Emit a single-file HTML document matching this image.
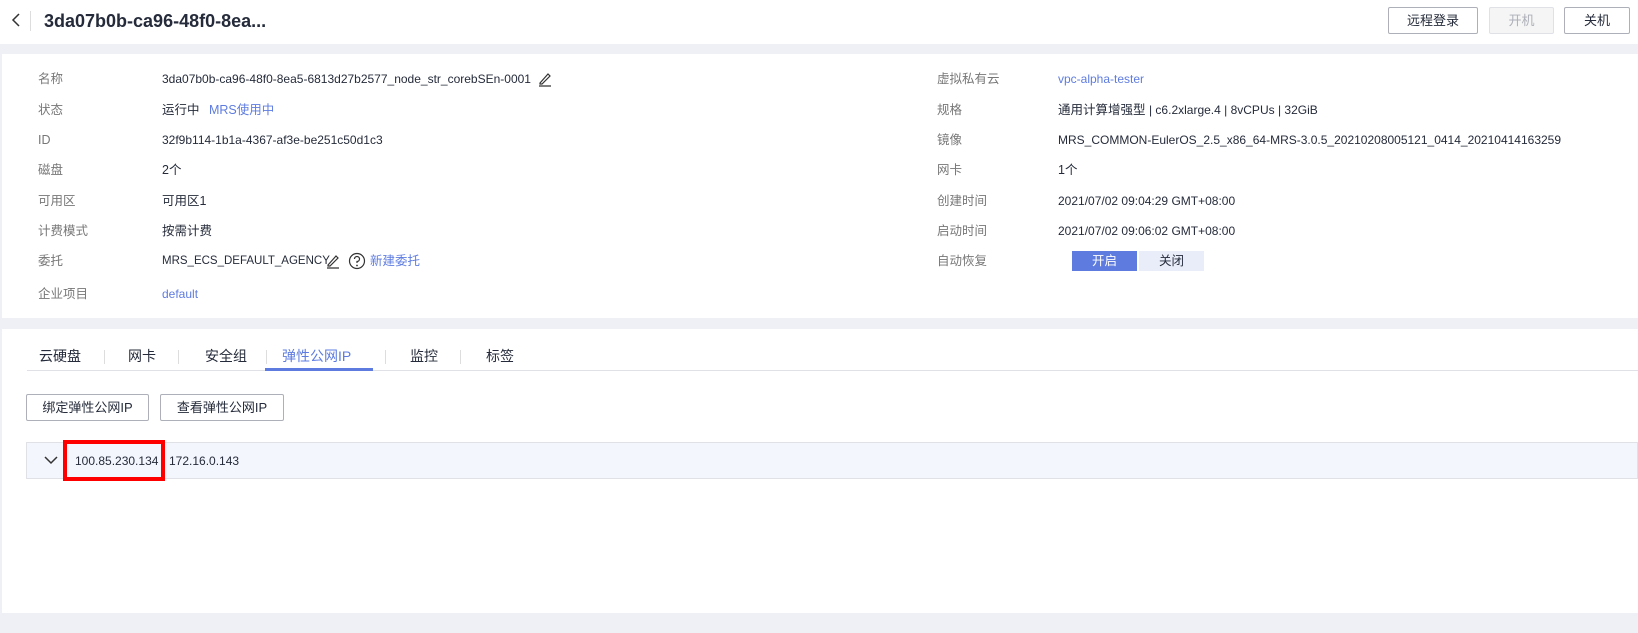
<!DOCTYPE html>
<html><head><meta charset="utf-8"><style>
*{margin:0;padding:0;box-sizing:border-box}
body{width:1638px;height:633px;background:#eff0f5;font-family:"Liberation Sans","Noto Sans CJK SC",sans-serif;font-size:12.5px;color:#252b3a;position:relative;overflow:hidden}
.a{position:absolute;white-space:nowrap;line-height:18px}
.l{color:#777}
.k{color:#5e7ce0}
.n{font-size:12px}
.btn{position:absolute;border:1px solid #adb0b8;background:#fff;text-align:center;font-size:13px;border-radius:2px}
</style></head><body>
<div class="a" style="left:0;top:0;width:1638px;height:44px;background:#fff"></div>
<svg class="a" style="left:9px;top:12px" width="14" height="16"><path d="M10 2 L4 8 L10 14" stroke="#333" stroke-width="1.5" fill="none"/></svg>
<div class="a" style="left:30px;top:11px;width:1px;height:20px;background:#ddd"></div>
<div class="a" style="left:44px;top:10px;font-size:18px;line-height:22px;font-weight:bold;color:#252b3a">3da07b0b-ca96-48f0-8ea...</div>
<div class="btn" style="left:1388px;top:7px;width:90px;height:27px;line-height:25px">远程登录</div>
<div class="btn" style="left:1489px;top:7px;width:65px;height:27px;line-height:25px;background:#f5f5f6;border-color:#dfe1e6;color:#adb0b8">开机</div>
<div class="btn" style="left:1564px;top:7px;width:66px;height:27px;line-height:25px">关机</div>

<div class="a" style="left:2px;top:54px;width:1636px;height:264px;background:#fff"></div>
<div class="a l" style="left:38px;top:70px">名称</div><div class="a n" style="left:162px;top:70px">3da07b0b-ca96-48f0-8ea5-6813d27b2577_node_str_corebSEn-0001</div>
<svg class="a" style="left:537px;top:71px" width="16" height="16"><path d="M3 12 L11 3 L13 5 L5 13 L3 13 Z M2 15 H14" stroke="#333" stroke-width="1.2" fill="none"/></svg>
<div class="a l" style="left:38px;top:101px">状态</div><div class="a" style="left:162px;top:101px">运行中 <span class="k" style="margin-left:6px">MRS使用中</span></div>
<div class="a l" style="left:38px;top:131px">ID</div><div class="a n" style="left:162px;top:131px">32f9b114-1b1a-4367-af3e-be251c50d1c3</div>
<div class="a l" style="left:38px;top:161px">磁盘</div><div class="a" style="left:162px;top:161px">2个</div>
<div class="a l" style="left:38px;top:192px">可用区</div><div class="a" style="left:162px;top:192px">可用区1</div>
<div class="a l" style="left:38px;top:222px">计费模式</div><div class="a" style="left:162px;top:222px">按需计费</div>
<div class="a l" style="left:38px;top:252px">委托</div><div class="a" style="left:162px;top:252px;font-size:11.5px">MRS_ECS_DEFAULT_AGENCY</div>
<svg class="a" style="left:325px;top:253px" width="16" height="16"><path d="M3 12 L11 3 L13 5 L5 13 L3 13 Z M2 15 H14" stroke="#333" stroke-width="1.2" fill="none"/></svg>
<svg class="a" style="left:348px;top:252px" width="18" height="18"><circle cx="9" cy="9" r="7.5" stroke="#333" stroke-width="1.2" fill="none"/><path d="M6.5 7 A2.5 2.5 0 1 1 9 9.5 V11" stroke="#333" stroke-width="1.2" fill="none"/><circle cx="9" cy="13.5" r=".9" fill="#333"/></svg>
<div class="a k" style="left:370px;top:252px">新建委托</div>
<div class="a l" style="left:38px;top:285px">企业项目</div><div class="a k n" style="left:162px;top:285px">default</div>

<div class="a l" style="left:937px;top:70px">虚拟私有云</div><div class="a k n" style="left:1058px;top:70px">vpc-alpha-tester</div>
<div class="a l" style="left:937px;top:101px">规格</div><div class="a" style="left:1058px;top:101px">通用计算增强型 <span class="n">| c6.2xlarge.4 | 8vCPUs | 32GiB</span></div>
<div class="a l" style="left:937px;top:131px">镜像</div><div class="a n" style="left:1058px;top:131px">MRS_COMMON-EulerOS_2.5_x86_64-MRS-3.0.5_20210208005121_0414_20210414163259</div>
<div class="a l" style="left:937px;top:161px">网卡</div><div class="a" style="left:1058px;top:161px">1个</div>
<div class="a l" style="left:937px;top:192px">创建时间</div><div class="a n" style="left:1058px;top:192px">2021/07/02 09:04:29 GMT+08:00</div>
<div class="a l" style="left:937px;top:222px">启动时间</div><div class="a n" style="left:1058px;top:222px">2021/07/02 09:06:02 GMT+08:00</div>
<div class="a l" style="left:937px;top:252px">自动恢复</div>
<div class="a" style="left:1072px;top:251px;width:65px;height:20px;background:#5e7ce0;color:#fff;text-align:center;line-height:20px">开启</div>
<div class="a" style="left:1139px;top:251px;width:65px;height:20px;background:#e9edfa;text-align:center;line-height:20px">关闭</div>

<div class="a" style="left:2px;top:329px;width:1636px;height:284px;background:#fff"></div>
<div class="a" style="left:27px;top:370px;width:1611px;height:1px;background:#dfe1e6"></div>
<div class="a" style="left:39px;top:347px;font-size:14px">云硬盘</div>
<div class="a" style="left:128px;top:347px;font-size:14px">网卡</div>
<div class="a" style="left:205px;top:347px;font-size:14px">安全组</div>
<div class="a k" style="left:282px;top:347px;font-size:14px">弹性公网IP</div>
<div class="a" style="left:410px;top:347px;font-size:14px">监控</div>
<div class="a" style="left:486px;top:347px;font-size:14px">标签</div>
<div class="a" style="left:104px;top:350px;width:1px;height:14px;background:#ddd"></div>
<div class="a" style="left:178px;top:350px;width:1px;height:14px;background:#ddd"></div>
<div class="a" style="left:266px;top:350px;width:1px;height:14px;background:#ddd"></div>
<div class="a" style="left:385px;top:350px;width:1px;height:14px;background:#ddd"></div>
<div class="a" style="left:460px;top:350px;width:1px;height:14px;background:#ddd"></div>
<div class="a" style="left:265px;top:368px;width:108px;height:3px;background:#5e7ce0"></div>
<div class="btn" style="left:26px;top:394px;width:123px;height:27px;line-height:25px">绑定弹性公网IP</div>
<div class="btn" style="left:160px;top:394px;width:124px;height:27px;line-height:25px">查看弹性公网IP</div>
<div class="a" style="left:26px;top:442px;width:1612px;height:37px;background:#f3f6fc;border:1px solid #dfe1e6"></div>
<svg class="a" style="left:43px;top:454px" width="16" height="12"><path d="M2 3 L8 9 L14 3" stroke="#333" stroke-width="1.5" fill="none"/></svg>
<div class="a" style="left:63px;top:440px;width:102px;height:41px;border:4px solid #f00"></div>
<div class="a n" style="left:75px;top:452px">100.85.230.134</div>
<div class="a n" style="left:169px;top:452px">172.16.0.143</div>
</body></html>
